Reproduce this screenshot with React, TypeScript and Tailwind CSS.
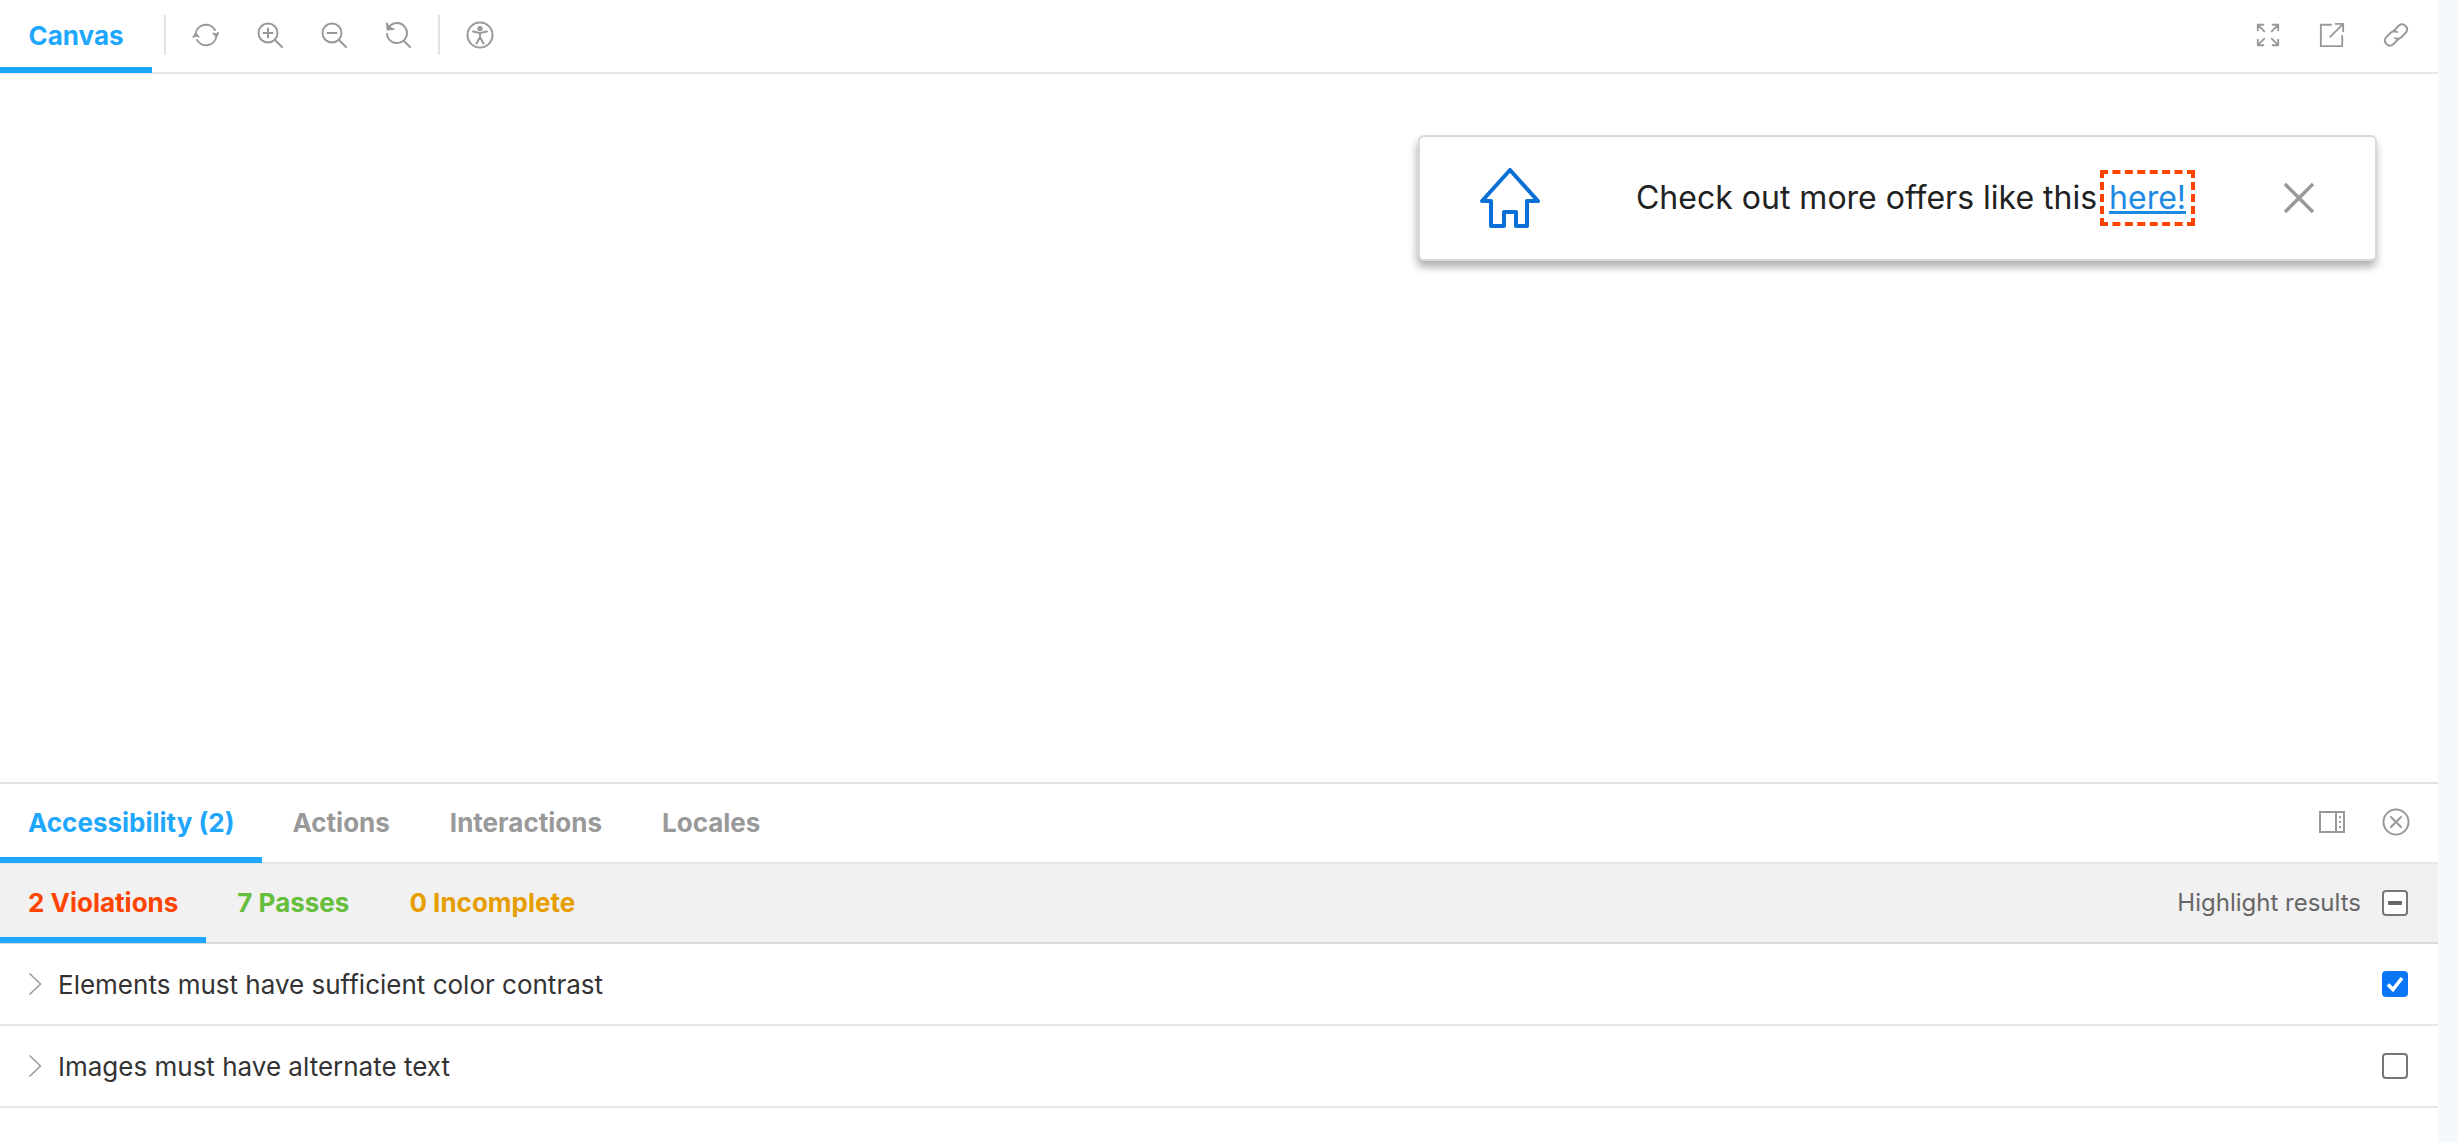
function Icon({ children, size = 28 }: { children: React.ReactNode; size?: number }) {
  return (
    <svg width={size} height={size} viewBox="0 0 28 28" fill="none" stroke="#999999" strokeWidth="2" strokeLinecap="round" strokeLinejoin="round">
      {children}
    </svg>
  );
}

function ToolButton({ children }: { children: React.ReactNode }) {
  return <div className="flex h-full w-[64px] items-center justify-center">{children}</div>;
}

function Sep() {
  return <div className="mx-2 h-[40px] w-[2px] bg-[#e3e3e3]" />;
}

function Row({ label, checked }: { label: string; checked?: boolean }) {
  return (
    <div className="flex h-[82px] items-center border-b-2 border-[#e6e6e6] pl-[28px] pr-[30px]">
      <svg width="14" height="24" viewBox="0 0 14 24" fill="none" stroke="#999999" strokeWidth="1.5" className="mr-[16px]">
        <path d="M1.5 1.5 L12.5 12 L1.5 22.5" />
      </svg>
      <span className="flex-1 text-[26px] text-[#333333]">{label}</span>
      {checked ? (
        <div className="flex h-[26px] w-[26px] items-center justify-center rounded-[4px] bg-[#0b76f5]">
          <svg width="20" height="20" viewBox="0 0 20 20" fill="none" stroke="#ffffff" strokeWidth="3.6">
            <path d="M3 10.5 L8 15.5 L17 4" />
          </svg>
        </div>
      ) : (
        <div className="h-[26px] w-[26px] rounded-[4px] border-2 border-[#767676] bg-white" />
      )}
    </div>
  );
}

export default function App() {
  return (
    <div className="flex h-screen bg-[#f6f9fc] font-['Inter',sans-serif]">
      <div className="flex h-full w-[2438px] flex-col bg-white">
        {/* top toolbar */}
        <div className="flex h-[74px] items-center border-b-2 border-[#e6e6e6] pr-[10px]">
          <div className="flex h-[74px] w-[152px] items-center justify-center border-b-[6px] border-[#1ea7fd] pt-[4px] text-[26px] font-bold text-[#1ea7fd]">
            Canvas
          </div>
          <div className="ml-3 flex h-full items-center pb-[2px]">
            <div className="h-[40px] w-[2px] bg-[#e3e3e3]" />
            <div className="ml-2" />
            <ToolButton>
              <Icon>
                <path d="M3.5 13 A10.5 10.5 0 0 1 23 9" />
                <path d="M24.5 15 A10.5 10.5 0 0 1 5 19" />
                <path d="M26 12 L24.5 15 L21.5 12.5" fill="#999999" />
                <path d="M1.5 16 L3.5 13 L6.5 15.5" fill="#999999" />
              </Icon>
            </ToolButton>
            <ToolButton>
              <Icon>
                <circle cx="12" cy="12" r="9.5" />
                <path d="M19 19 L26 26" />
                <path d="M12 7.5 V16.5 M7.5 12 H16.5" />
              </Icon>
            </ToolButton>
            <ToolButton>
              <Icon>
                <circle cx="12" cy="12" r="9.5" />
                <path d="M19 19 L26 26" />
                <path d="M7.5 12 H16.5" />
              </Icon>
            </ToolButton>
            <ToolButton>
              <Icon>
                <path d="M5 6 A10 10 0 1 1 3 13" />
                <path d="M20 20 L26 26" />
                <path d="M3 2.5 L3.5 8.5 L9.5 8" fill="#999999" />
              </Icon>
            </ToolButton>
            <Sep />
            <ToolButton>
              <Icon>
                <circle cx="14" cy="14" r="12.5" />
                <circle cx="14" cy="7.5" r="1.6" fill="#999999" />
                <path d="M7 10.5 L14 12 L21 10.5 M14 12 V16 M14 16 L10.5 22.5 M14 16 L17.5 22.5" />
              </Icon>
            </ToolButton>
          </div>
          <div className="ml-auto flex h-full items-center pb-[2px]">
            <ToolButton>
              <Icon size={26}>
                <path d="M3 9 V3 H9 M3 3 L10 10 M19 3 H25 V9 M25 3 L18 10 M3 19 V25 H9 M3 25 L10 18 M25 19 V25 H19 M25 25 L18 18" />
              </Icon>
            </ToolButton>
            <ToolButton>
              <Icon size={26}>
                <path d="M13 3 H2 V26 H25 V15" />
                <path d="M12 16 L26 2 M18 2 H26 V10" />
              </Icon>
            </ToolButton>
            <ToolButton>
              <Icon>
                <path d="M12 9.5 L17 4.5 A5 5 0 0 1 24 11.5 L19 16.5 A5 5 0 0 1 13 17" />
                <path d="M16 18.5 L11 23.5 A5 5 0 0 1 4 16.5 L9 11.5 A5 5 0 0 1 15 11" />
              </Icon>
            </ToolButton>
          </div>
        </div>

        {/* canvas */}
        <div className="flex min-h-0 flex-1 items-start justify-end pr-[61px] pt-[61px]">
          <div className="flex h-[126px] w-[959px] items-center justify-between rounded-[6px] border-2 border-[#d9d9d9] bg-white px-[60px] shadow-[-1px_6px_8px_rgba(0,0,0,0.32)]">
            <svg width="60" height="60" viewBox="0 0 60 60" fill="none" stroke="#0a6fd6" strokeWidth="4" strokeLinejoin="round">
              <path d="M30 2 L58 33 H47 V58 H36 V44 H24 V58 H11 V33 H2 Z" />
            </svg>
            <div className="ml-[8px] flex items-center text-[32px] text-[#222222]">
              <span>Check out more offers like this</span>
              <a className="ml-[3px] border-4 border-dashed border-[#ff4400] px-[5px] text-[#1e88e5] underline">here!</a>
            </div>
            <svg width="32" height="32" viewBox="0 0 32 32" fill="none" stroke="#999999" strokeWidth="3.4">
              <path d="M2 2 L30 30 M30 2 L2 30" />
            </svg>
          </div>
        </div>

        {/* addons panel */}
        <div className="shrink-0 border-t-2 border-[#e2e2e2]">
          <div className="flex h-[80px] items-center border-b-2 border-[#e6e6e6] pr-[10px]">
            <div className="flex h-[80px] items-center justify-center border-b-[6px] border-[#1ea7fd] px-[28px] pt-[4px] text-[26px] font-bold text-[#1ea7fd]">
              Accessibility (2)
            </div>
            <div className="flex h-full items-center gap-[60px] pb-[2px] pl-[30px] text-[26px] font-bold text-[#999999]">
              <span>Actions</span>
              <span>Interactions</span>
              <span>Locales</span>
            </div>
            <div className="ml-auto flex h-full items-center pb-[2px]">
              <ToolButton>
                <svg width="26" height="24" viewBox="0 0 26 24" fill="none" stroke="#999999" strokeWidth="2">
                  <rect x="1" y="2" width="24" height="20" />
                  <path d="M17 2 V22" />
                  <path d="M21 6 V8 M21 11 V13 M21 16 V18" />
                </svg>
              </ToolButton>
              <ToolButton>
                <Icon>
                  <circle cx="14" cy="14" r="12.5" />
                  <path d="M9 9 L19 19 M19 9 L9 19" />
                </Icon>
              </ToolButton>
            </div>
          </div>
          <div className="flex h-[80px] items-center border-b-2 border-[#d9d9d9] bg-[#f1f1f1] pr-[30px]">
            <div className="flex h-[80px] items-center justify-center border-b-[6px] border-[#1ea7fd] px-[28px] pt-[4px] text-[26px] font-bold text-[#ff4400]">
              2 Violations
            </div>
            <div className="flex h-full items-center gap-[60px] pb-[2px] pl-[31px] text-[26px] font-bold">
              <span className="text-[#66bf3c]">7 Passes</span>
              <span className="text-[#e69d00]">0 Incomplete</span>
            </div>
            <span className="ml-auto mr-[21px] text-[24px] text-[#666666]">Highlight results</span>
            <div className="flex h-[26px] w-[26px] items-center justify-center rounded-[4px] border-2 border-[#767676] bg-white">
              <div className="h-[4px] w-[14px] rounded-[1px] bg-[#666666]" />
            </div>
          </div>
          <Row label="Elements must have sufficient color contrast" checked />
          <Row label="Images must have alternate text" />
          <div className="h-[34px]" />
        </div>
      </div>
      <div className="flex-1" />
    </div>
  );
}
